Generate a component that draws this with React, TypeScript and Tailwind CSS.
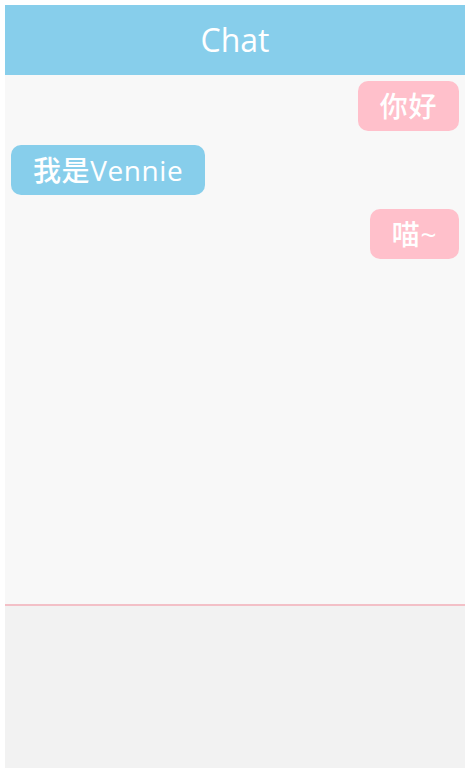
import React from "react"

type Msg = { text: string; mine: boolean }

const messages: Msg[] = [
    { text: "你好", mine: true },
    { text: "我是Vennie", mine: false },
    { text: "喵~", mine: true },
]

const App: React.FC = () => {
    return (
        <div className="w-[470px] h-[773px] bg-white p-[5px]" style={{ fontFamily: '"Open Sans", "Noto Sans CJK SC", sans-serif' }}>
            <div className="flex flex-col h-full">
                <div className="h-[70px] bg-[#87ceeb] flex items-center justify-center text-white text-[32px] font-medium">
                    Chat
                </div>
                <div className="flex-1 bg-[#f8f8f8] flex flex-col gap-[14px] px-[6px] pt-[6px]">
                    {messages.map((m, i) => (
                        <div key={i} className={m.mine ? "flex justify-end" : "flex justify-start"}>
                            <div
                                className={
                                    "h-[50px] flex items-center px-[22px] rounded-[10px] text-white text-[28px] font-medium tracking-[0.6px] " +
                                    (m.mine ? "bg-[#ffc0cb]" : "bg-[#87ceeb]")
                                }
                            >
                                {m.text}
                            </div>
                        </div>
                    ))}
                </div>
                <div className="h-[164px] bg-[#f2f2f2] border-t-2 border-[#f3c0c7]"></div>
            </div>
        </div>
    )
}

export default App
